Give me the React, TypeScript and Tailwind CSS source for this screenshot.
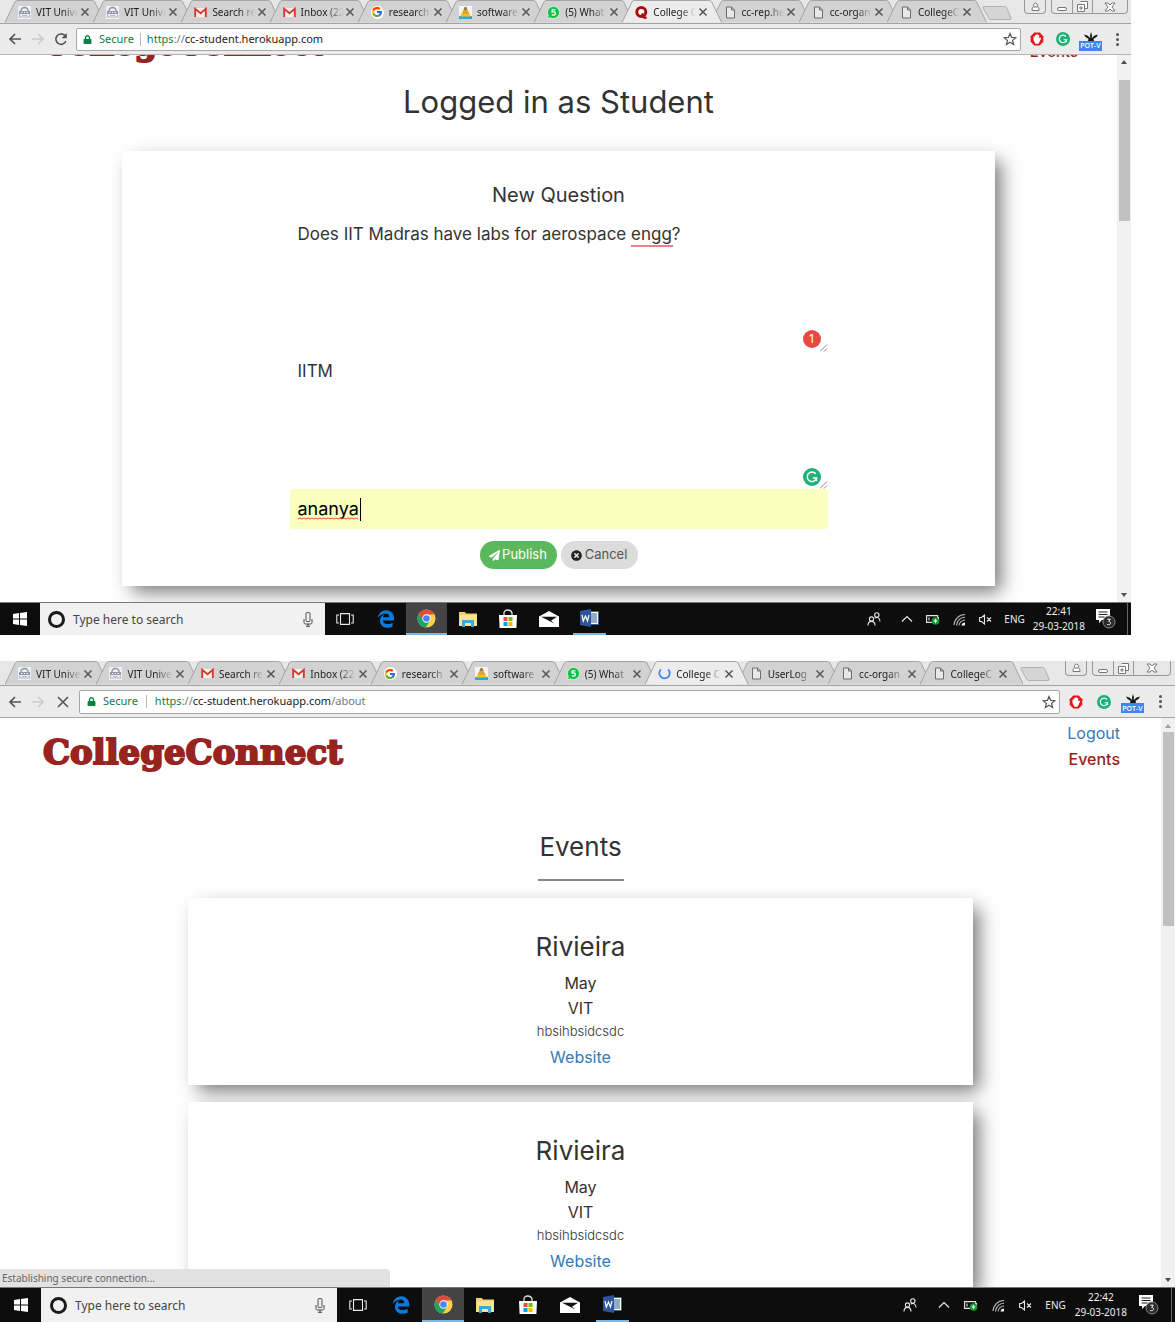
import React from "react";
import { FcGoogle } from "react-icons/fc";
import { FaEdgeLegacy, FaLock, FaPaperPlane, FaTimesCircle } from "react-icons/fa";

type IconProps = { className?: string };

/* ---------- favicons ---------- */

function CrestIcon() {
  return (
    <svg viewBox="0 0 13 13" className="size-[13px]">
      <rect width="13" height="13" fill="#eef0f4" />
      <path d="M3 5a3.500 3.500 0 0 1 7 0" fill="none" stroke="#8d92a5" strokeWidth="1.4" />
      <path d="M1 5h11v3H1z" fill="#9396a8" />
      <path d="M3 6.500h1.500M6 6.500h1M8.500 6.500h1.500" stroke="#fff" />
      <path d="M1.500 8.500v2.500h10V8.500M4 9.500h5" fill="none" stroke="#b5b8c6" strokeWidth="1.2" />
    </svg>
  );
}

function GmailIcon() {
  return (
    <svg viewBox="0 0 13 13" className="size-[13px]">
      <path d="M1 2h11v9H1z" fill="#f3f1f0" />
      <path d="M1.200 11V2.800L6.500 7.200l5.300-4.400V11" fill="none" stroke="#d5392c" strokeWidth="1.9" />
    </svg>
  );
}

function GoogleIcon() {
  return (
    <span className="flex size-[13px] items-center justify-center rounded-full bg-white">
      <FcGoogle className="size-3" />
    </span>
  );
}

function ConeIcon() {
  return (
    <svg viewBox="0 0 13 13" className="size-[13px]">
      <rect width="13" height="13" fill="#f4f4f4" />
      <path d="M0 10h13v3H0z" fill="#2aa7dd" />
      <path d="M5.500 1h2L8.500 4h-4z" fill="#8a8055" />
      <path d="M4.500 4h4l2 4h-8z" fill="#e5a323" />
      <path d="M2.500 8h8l1.500 2.500H1z" fill="#f2c31c" />
    </svg>
  );
}

function WhatsIcon() {
  return (
    <svg viewBox="0 0 13 13" className="size-[13px]">
      <path d="M6.500.5a6 6 0 1 1-3 11.200L.5 12.500l.9-3A6 6 0 0 1 6.500.5z" fill="#0dc143" stroke="#fff" strokeWidth=".6" />
      <path d="M8.400 3.800H5.200v2.400c2-.6 3.300 0 3.200 1.400-.1 1.500-2 1.900-3.600 1.100" fill="none" stroke="#fff" strokeWidth="1.300" />
    </svg>
  );
}

function QIcon() {
  return (
    <svg viewBox="0 0 13 13" className="size-[13px]">
      <circle cx="6.300" cy="6" r="4.500" fill="#fff" stroke="#a80d0d" strokeWidth="3" />
      <path d="M6 8l2-1.200 2 3.400c.4.700 1.200.8 1.800.2v1.800c-1.500 1.200-3 .8-4-.8z" fill="#a80d0d" />
    </svg>
  );
}

function SpinnerIcon() {
  return (
    <svg viewBox="0 0 13 13" className="size-[13px]">
      <path d="M3 2.300a5.200 5.200 0 1 0 7.200.2" fill="none" stroke="#4285f4" strokeWidth="1.800" />
    </svg>
  );
}

function PageIcon() {
  return (
    <svg viewBox="0 0 13 13" className="size-[13px]">
      <path d="M2.500 1h5l3 3v8h-8zM7.500 1v3h3" fill="#e8e8e8" stroke="#6b6b6b" />
    </svg>
  );
}

/* ---------- toolbar icons ---------- */

function BackIcon({ className }: IconProps) {
  return (
    <svg viewBox="0 0 14 12" className={className}>
      <path d="M13 6H2M7 1L2 6l5 5" fill="none" stroke="currentColor" strokeWidth="1.700" />
    </svg>
  );
}

function ReloadIcon() {
  return (
    <svg viewBox="0 0 14 14" className="size-[14px]">
      <path d="M11.900 9A5.200 5.200 0 1 1 10.700 3.400L12 4.700" fill="none" stroke="#555" strokeWidth="1.600" />
      <path d="M12.800 1v5.200H7.600z" fill="#555" />
    </svg>
  );
}

function CrossIcon({ className }: IconProps) {
  return (
    <svg viewBox="0 0 10 10" className={className}>
      <path d="M1.500 1.500l7 7M8.500 1.500l-7 7" stroke="currentColor" strokeWidth="1.500" />
    </svg>
  );
}

function StopIcon() {
  return (
    <svg viewBox="0 0 14 14" className="size-[14px]">
      <path d="M2 2l10 10M12 2L2 12" stroke="#555" strokeWidth="1.600" />
    </svg>
  );
}

function StarIcon() {
  return (
    <svg viewBox="0 0 14 14" className="size-[14px]">
      <path d="M7 1.500l1.600 3.900 4.200.3-3.200 2.700 1 4.100L7 10.300l-3.600 2.200 1-4.100L1.200 5.700l4.200-.3z" fill="none" stroke="#555" strokeWidth="1.200" />
    </svg>
  );
}

function HandIcon() {
  return (
    <svg viewBox="0 0 14 14" className="size-[14px]">
      <path d="M4.300.5h5.400l3.600 3.800v5.400l-3.600 3.800H4.300L.7 9.700V4.300z" fill="#e8151a" />
      <path d="M5.200 11.500L3.500 8V4.500h1.400V3h1.400v-.8h1.500V3h1.400v3.600l1-1 1 .7-2.200 4.700-.8.800H5.800z" fill="#fff" />
    </svg>
  );
}

function GrammarIcon({ className }: IconProps) {
  return (
    <svg viewBox="0 0 18 18" className={className}>
      <circle cx="9" cy="9" r="9" fill="#1fb177" />
      <path d="M12.800 5.800A4.800 4.800 0 1 0 13.700 10H9.800M13.500 9.500v3.500" fill="none" stroke="#fff" strokeWidth="1.500" />
    </svg>
  );
}

function LeafIcon() {
  return (
    <span className="flex w-[23px] flex-col items-center">
      <svg viewBox="0 0 16 9" className="h-[9px] w-4">
        <path d="M8 0l1 3.500L8.700 6l3-2.500L15 2.500 13.500 5l-3 1.800L11 9H5l.5-2.200L2.500 5 1 2.500l3.300 1 3 2.500L7 3.500z" fill="#151515" />
      </svg>
      <span className="flex h-[10px] w-full items-center justify-center bg-[#3f84f1] font-['Open_Sans',sans-serif] text-[7px] leading-none font-semibold text-white">
        POT-V
      </span>
    </span>
  );
}

/* ---------- taskbar icons ---------- */

function WindowsIcon() {
  return (
    <svg viewBox="0 0 14 14" className="size-[14px]">
      <path d="M0 2l6-.900v5.500H0zM7 1l7-1v6.600H7zM0 7.500h6V13l-6-.900zM7 7.500h7V14l-7-1z" fill="#fff" />
    </svg>
  );
}

function MicIcon() {
  return (
    <svg viewBox="0 0 10 15" className="h-[15px] w-[10px]">
      <rect x="3" y=".6" width="4" height="9" rx="1" fill="#eee" stroke="#555" />
      <path d="M1 7v3.500c0 1 .8 1.500 1.500 1.500h5c.8 0 1.500-.5 1.500-1.500V7M5 12v2M3 14.300h4" fill="none" stroke="#444" />
    </svg>
  );
}

function TaskViewIcon() {
  return (
    <svg viewBox="0 0 18 12" className="h-3 w-[18px]">
      <path d="M4.500.6h9v10.800h-9zM3 2H.800v8H3M15 2h2.200v8H15" fill="none" stroke="#e8e8e8" strokeWidth="1.100" />
    </svg>
  );
}

function EdgeIcon() {
  return <FaEdgeLegacy className="size-[18px] text-[#0a7bdc]" />;
}

function ChromeIcon() {
  return (
    <svg viewBox="0 0 20 20" className="size-[19px]">
      <circle cx="10" cy="10" r="9.500" fill="#ffd149" />
      <path d="M1.800 5.200A9.500 9.500 0 0 1 18.500 5.800H10L6 12.200z" fill="#dc4b3e" />
      <path d="M1.800 5.200A9.500 9.500 0 0 0 9.200 19.500l4.300-7H6.500z" fill="#1ea362" />
      <circle cx="10" cy="10" r="4.400" fill="#fff" />
      <circle cx="10" cy="10" r="3.500" fill="#4587f3" />
    </svg>
  );
}

function FolderIcon() {
  return (
    <svg viewBox="0 0 18 16" className="h-4 w-[18px]">
      <path d="M0 1h6l1 1.500h11V15H0z" fill="#f5cf66" />
      <path d="M1 4h17v11H0z" fill="#ffe292" />
      <path d="M3 9h12v7h-3v-4H6v4H3z" fill="#3ba8de" />
    </svg>
  );
}

function StoreIcon() {
  return (
    <svg viewBox="0 0 20 20" className="size-5">
      <path d="M6 6V4c0-4 7-4 8 0v2" fill="none" stroke="#ddd" strokeWidth="1.300" />
      <path d="M1 6h18l-.6 13H1.600z" fill="#fff" />
      <path d="M5.500 8h4v4h-4z" fill="#f04e23" />
      <path d="M10.500 8h4v4h-4z" fill="#7fba00" />
      <path d="M5.500 13h4v4h-4z" fill="#00a1f1" />
      <path d="M10.500 13h4v4h-4z" fill="#ffb900" />
    </svg>
  );
}

function MailIcon() {
  return (
    <svg viewBox="0 0 20 16" className="h-4 w-5">
      <path d="M0 5.500L10 0l10 5.500V16H0z" fill="#fff" />
      <path d="M2 5.800h16l-6 4 3.500 3-6-3.300z" fill="#111" />
    </svg>
  );
}

function WordIcon() {
  return (
    <svg viewBox="0 0 19 18" className="h-[18px] w-[19px]">
      <path d="M10 2.500h8.500v13H10z" fill="#fff" stroke="#2b5797" strokeWidth=".8" />
      <path d="M11 5h6M11 7h6M11 9h6M11 11h6M11 13h6" stroke="#2b5797" />
      <path d="M0 2l11-2v18L0 16z" fill="#2b5699" />
      <path d="M2 6l1.300 6L5.500 7l2 5L9 6" fill="none" stroke="#fff" strokeWidth="1.200" />
    </svg>
  );
}

function PeopleIcon() {
  return (
    <svg viewBox="0 0 14 14" className="size-[14px]">
      <g fill="none" stroke="#e6e6e6" strokeWidth="1.100">
        <circle cx="4.500" cy="7" r="2.100" />
        <path d="M1 13.500c0-5.500 7-5.500 7 0" />
        <circle cx="9.800" cy="3" r="2.200" />
        <path d="M7.800 6c2.500-1.500 5.200 0 5.200 3.500" />
      </g>
    </svg>
  );
}

function ChevronIcon() {
  return (
    <svg viewBox="0 0 12 8" className="h-2 w-3">
      <path d="M1 6.500l5-5 5 5" fill="none" stroke="#e6e6e6" strokeWidth="1.200" />
    </svg>
  );
}

function BatteryIcon() {
  return (
    <svg viewBox="0 0 14 11" className="h-[11px] w-[14px]">
      <path d="M.6 1.600h11v6.800h-11zM3 3.500v3M12.500 3v3" fill="none" stroke="#e6e6e6" strokeWidth="1.100" />
      <circle cx="9.500" cy="7" r="3.800" fill="#149b2e" />
      <path d="M9.500 4.800v4.400M8.300 5.800v1.500h2.400V5.800" fill="none" stroke="#fff" strokeWidth=".8" />
    </svg>
  );
}

function WifiIcon() {
  return (
    <svg viewBox="0 0 13 13" className="size-[13px]">
      <g fill="none" stroke="#b9b9b9" strokeWidth="1.100">
        <path d="M1 12A11 11 0 0 1 12 1.500" />
        <path d="M3.500 12.500A8.500 8.500 0 0 1 12 4.300" />
        <path d="M6 12.500A6 6 0 0 1 12 7" />
      </g>
      <path d="M8.500 12.500A3.500 3.500 0 0 1 12 9.500v3z" fill="#eee" />
    </svg>
  );
}

function MuteIcon() {
  return (
    <svg viewBox="0 0 13 11" className="h-[11px] w-[13px]">
      <path d="M.6 3.500h2L5.500 1v9L2.600 7.500h-2zM8 3.500l4 4M12 3.500l-4 4" fill="none" stroke="#e6e6e6" strokeWidth="1.100" />
    </svg>
  );
}

function NoticeIcon() {
  return (
    <svg viewBox="0 0 20 20" className="size-5">
      <path d="M0 0h14v11H6l-3 3v-3H0z" fill="#fff" />
      <path d="M2.500 3h9M2.500 5.500h9M2.500 8h6" stroke="#222" />
      <circle cx="13" cy="13" r="6" fill="#2c2c2c" stroke="#888" />
      <path d="M11.300 10.200h3l-1.600 2.200c2.700.2 2.200 3.400-.2 3.300-.6 0-1.100-.2-1.500-.5" fill="none" stroke="#fff" />
    </svg>
  );
}

/* ---------- browser chrome ---------- */

type Tab = { title: string; icon: React.ReactNode; active?: boolean };

function TabItem({ tab }: { tab: Tab }) {
  return (
    <div className={tab.active ? "relative z-10 h-full min-w-0 flex-1" : "relative h-full min-w-0 flex-1"}>
      <svg viewBox="0 0 100 24" preserveAspectRatio="none" className="absolute top-0 left-0 h-full w-[113%]">
        <path
          d="M0 23.500L10 2Q11 .5 13 .5H87Q89 .5 90 2L100 23.500"
          fill={tab.active ? "#ececec" : "#d2d2d2"}
          stroke="#a3a3a3"
          vectorEffect="non-scaling-stroke"
        />
      </svg>
      <div className="relative flex h-full items-center pt-px pl-[13px]">
        <span className="shrink-0">{tab.icon}</span>
        <span className="ml-[5px] min-w-0 flex-1 overflow-hidden text-[10px] leading-4 whitespace-nowrap text-[#222] [mask-image:linear-gradient(to_right,black_60%,transparent_95%)]">
          {tab.title}
        </span>
        <button type="button" aria-label="Close tab" className="mr-[3px] shrink-0">
          <CrossIcon className="size-[10px] text-[#555]" />
        </button>
      </div>
    </div>
  );
}

function WindowControls({ large }: { large?: boolean }) {
  return (
    <div className={large ? "flex h-[15px] gap-[5px]" : "flex h-[14px] gap-[5px]"}>
      <button type="button" aria-label="Profile" className="flex w-[22px] items-center justify-center rounded-b border border-t-0 border-[#999]">
        <svg viewBox="0 0 9 10" className="h-[10px] w-[9px]">
          <path d="M3 4.500a2 2 0 1 1 3 0C7.500 5 8 6 8 8.500H1C1 6 1.500 5 3 4.500zM3 5h3" fill="#fff" stroke="#777" />
        </svg>
      </button>
      <div className={large ? "flex w-[79px] rounded-b border border-t-0 border-[#999]" : "flex w-[77px] rounded-b border border-t-0 border-[#999]"}>
        <button type="button" aria-label="Minimise" className="flex w-5 items-end justify-center pb-[2px]">
          <span className="h-[4px] w-[10px] rounded-xs border border-[#777] bg-white" />
        </button>
        <button type="button" aria-label="Restore" className="flex w-[21px] items-center justify-center border-x border-[#999]">
          <svg viewBox="0 0 11 11" className="size-[11px]">
            <path d="M3.500.5h7v7h-3M.5 3.500h7v7h-7zM3 6h2v2H3z" fill="#fff" stroke="#777" />
          </svg>
        </button>
        <button type="button" aria-label="Close window" className="flex flex-1 items-center justify-center">
          <svg viewBox="0 0 12 10" className="h-[10px] w-3">
            <path d="M1 1h3l2 2 2-2h3L8 5l3 4H8L6 7 4 9H1l3-4z" fill="#fff" stroke="#777" />
          </svg>
        </button>
      </div>
    </div>
  );
}

type ChromeProps = { tabs: Tab[]; path?: string; loading?: boolean; large?: boolean };

function BrowserChrome({ tabs, path, loading, large }: ChromeProps) {
  return (
    <header className="bg-[#e7e7e7] font-['Noto_Sans','Open_Sans',sans-serif] font-normal">
      <div className={large ? "flex h-[25px] border-b border-[#a3a3a3] pr-[4px] pl-[5px]" : "flex h-6 border-b border-[#a3a3a3] pr-[3px] pl-[5px]"}>
        <div className="flex min-w-0 flex-1">
          {tabs.map((tab, i) => (
            <TabItem key={i} tab={tab} />
          ))}
        </div>
        <div className={large ? "ml-[9px] pt-[6px] pr-[15px]" : "ml-[7px] pt-[6px] pr-3"}>
          <svg viewBox="0 0 30 14" className="h-[14px] w-[30px]">
            <path d="M1.500.5h21q1.500 0 2 1L29 12q.5 1.500-1 1.500H9q-1.500 0-2-1L1 2Q.500.500 1.500.500z" fill="#d5d5d5" stroke="#b0b0b0" />
          </svg>
        </div>
        <WindowControls large={large} />
      </div>
      <div
        className={
          large
            ? "flex h-8 items-center border-b border-[#a8a8a8] bg-[#ececec] pl-2"
            : "flex h-[31px] items-center border-b border-[#b5b5b5] bg-[#ececec] pl-2"
        }
      >
        <button type="button" aria-label="Back">
          <BackIcon className="h-3 w-[14px] text-[#555]" />
        </button>
        <button type="button" aria-label="Forward" className="ml-[9px]">
          <BackIcon className="h-3 w-[14px] rotate-180 text-[#ccc]" />
        </button>
        <button type="button" aria-label={loading ? "Stop" : "Reload"} className={large ? "ml-[11px]" : "ml-[9px]"}>
          {loading ? <StopIcon /> : <ReloadIcon />}
        </button>
        <div className={large ? "ml-[9px] flex h-6 flex-1 items-center rounded-xs border border-[#a8a8a8] bg-white pr-[6px] pl-[7px] text-[11px]" : "ml-2 flex h-[23px] flex-1 items-center rounded-xs border border-[#a8a8a8] bg-white px-[6px] text-[11px]"}>
          <FaLock className="size-[9px] text-[#0b8043]" />
          <span className="ml-[7px] text-[#0b8043]">Secure</span>
          <span className={large ? "mx-2 h-[13px] w-px bg-[#bbb]" : "mx-[6px] h-[13px] w-px bg-[#bbb]"} />
          <span className="text-[#0b8043]">https</span>
          <span className="text-[#777]">://</span>
          <span className="text-[#222]">cc-student.herokuapp.com</span>
          <span className="text-[#777]">{path}</span>
          <button type="button" aria-label="Bookmark this page" className="-mr-[3px] ml-auto">
            <StarIcon />
          </button>
        </div>
        <div className={large ? "flex items-center gap-[10px] pr-[13px] pl-[9px]" : "flex items-center gap-[9px] pr-3 pl-[9px]"}>
          <HandIcon />
          <GrammarIcon className={large ? "ml-1 size-[14px]" : "ml-[3px] size-[14px]"} />
          <span className="-mr-1 pt-1">
            <LeafIcon />
          </span>
          <button type="button" aria-label="Menu" className="ml-[9px] flex flex-col gap-[2px]">
            <span className="size-[3px] rounded-full bg-[#555]" />
            <span className="size-[3px] rounded-full bg-[#555]" />
            <span className="size-[3px] rounded-full bg-[#555]" />
          </button>
        </div>
      </div>
    </header>
  );
}

function ScrollBar({ thumb, top, faded }: { thumb: string; top: string; faded?: boolean }) {
  return (
    <div className="flex w-[14px] shrink-0 flex-col items-center bg-[#f1f1f1]">
      <svg viewBox="0 0 8 4" className={top}>
        <path d="M1 4l3-4 3 4z" fill={faded ? "#a0a0a0" : "#505050"} />
      </svg>
      <div className={thumb} />
      <svg viewBox="0 0 8 4" className="mt-auto mb-[5px] h-1 w-2">
        <path d="M1 0l3 4 3-4z" fill="#505050" />
      </svg>
    </div>
  );
}

/* ---------- taskbar ---------- */

function Taskbar({ time, large }: { time: string; large?: boolean }) {
  const cell = "flex h-full flex-1 items-center justify-center";
  return (
    <footer
      className={
        large
          ? "flex h-[35px] items-center border-t border-[#777] bg-[#0d0d0d] font-['Noto_Sans','Open_Sans',sans-serif] font-normal"
          : "flex h-[33px] items-center border-t border-[#777] bg-[#0d0d0d] font-['Noto_Sans','Open_Sans',sans-serif] font-normal"
      }
    >
      <button type="button" aria-label="Start" className={large ? "flex w-[41px] justify-center" : "flex w-10 justify-center"}>
        <WindowsIcon />
      </button>
      <label
        className={
          large
            ? "flex h-full w-[296px] items-center bg-[#f1f1f1] pr-3 pl-[9px]"
            : "flex h-full w-[285px] items-center bg-[#f1f1f1] pr-3 pl-2"
        }
      >
        <span className="size-[17px] shrink-0 rounded-full border-[3px] border-[#1a1a1a]" />
        <input
          aria-label="Search"
          placeholder="Type here to search"
          className="mt-px ml-2 min-w-0 flex-1 bg-transparent text-[12px] outline-none placeholder:text-[#444]"
        />
        <MicIcon />
      </label>
      <div className={large ? "flex h-full w-[297px]" : "flex h-full w-[285px]"}>
        <button type="button" aria-label="Task view" className={cell}>
          <TaskViewIcon />
        </button>
        <button type="button" aria-label="Edge" className={cell}>
          <EdgeIcon />
        </button>
        <button type="button" aria-label="Chrome" className="flex h-full flex-1 items-center justify-center border-b-2 border-[#76b9ed] bg-[#444]">
          <ChromeIcon />
        </button>
        <button type="button" aria-label="Files" className={cell}>
          <FolderIcon />
        </button>
        <button type="button" aria-label="Store" className={cell}>
          <StoreIcon />
        </button>
        <button type="button" aria-label="Mail" className={cell}>
          <MailIcon />
        </button>
        <button type="button" aria-label="Word" className={cell}>
          <span className="flex h-full w-[33px] items-center justify-center border-b-2 border-[#76b9ed]">
            <WordIcon />
          </span>
        </button>
      </div>
      <div
        className={
          large
            ? "ml-auto flex h-full items-center gap-[14px] pr-[3px] text-[10px] text-[#eee]"
            : "ml-auto flex h-full items-center gap-[13px] pr-[3px] text-[10px] text-[#eee]"
        }
      >
        <PeopleIcon />
        <span className="ml-[7px] flex">
          <ChevronIcon />
        </span>
        <BatteryIcon />
        <WifiIcon />
        <MuteIcon />
        <span className="-ml-px">ENG</span>
        <span className="-mr-[2px] -ml-[5px] text-center leading-[15px]">
          {time}
          <br />
          29-03-2018
        </span>
        <NoticeIcon />
        <span className="-ml-[2px] h-full w-px bg-[#666]" />
      </div>
    </footer>
  );
}

/* ---------- page content ---------- */

const firstTabs: Tab[] = [
  { title: "VIT Unive", icon: <CrestIcon /> },
  { title: "VIT Unive", icon: <CrestIcon /> },
  { title: "Search re", icon: <GmailIcon /> },
  { title: "Inbox (22", icon: <GmailIcon /> },
  { title: "research", icon: <GoogleIcon /> },
  { title: "software", icon: <ConeIcon /> },
  { title: "(5) What", icon: <WhatsIcon /> },
  { title: "College C", icon: <QIcon />, active: true },
  { title: "cc-rep.he", icon: <PageIcon /> },
  { title: "cc-organ", icon: <PageIcon /> },
  { title: "CollegeC", icon: <PageIcon /> },
];

const secondTabs: Tab[] = [
  ...firstTabs.slice(0, 7),
  { title: "College C", icon: <SpinnerIcon />, active: true },
  { title: "UserLog", icon: <PageIcon /> },
  ...firstTabs.slice(9),
];

function ResizeGrip() {
  return (
    <svg viewBox="0 0 8 8" className="absolute right-0 bottom-0 z-10 size-2">
      <path d="M0 7.500L7 .5M4 7.500L7 4.500" stroke="#888" />
    </svg>
  );
}

function QuestionForm() {
  return (
    <form className="mx-auto mt-[29px] w-full max-w-[873px] bg-white pt-[30px] pb-[17px] shadow-[8px_8px_18px_-2px_#777]">
      <h2 className="text-center text-[20px] leading-7 font-normal">New Question</h2>
      <div className="mx-auto mt-[6px] w-full max-w-[538px] text-[17px] font-normal">
        <div className="relative h-[137px]">
          <textarea
            aria-label="Question"
            defaultValue="Does IIT Madras have labs for aerospace engg?"
            spellCheck={false}
            className="block size-full resize-none px-2 py-[7px] leading-6 outline-none"
          />
          <span className="absolute top-[30px] left-[341px] h-[2px] w-[42px] bg-[#ee7f86]" />
          <span className="absolute right-[7px] bottom-1 flex size-[18px] items-center justify-center rounded-full bg-[#e84a43] text-[12px] text-white">
            1
          </span>
          <ResizeGrip />
        </div>
        <div className="relative h-[137px]">
          <textarea
            aria-label="College"
            defaultValue="IITM"
            spellCheck={false}
            className="block size-full resize-none px-2 py-[7px] leading-6 outline-none"
          />
          <GrammarIcon className="absolute right-[7px] bottom-[3px] size-[18px]" />
          <ResizeGrip />
        </div>
        <div className="relative">
          <input
            aria-label="Name"
            defaultValue="ananya"
            spellCheck={false}
            className="block h-10 w-full rounded-[3px] bg-[#faffbd] px-2 pb-px text-[18px] text-black outline-none"
          />
          <span className="absolute top-[9px] left-[70px] h-[23px] w-px bg-black" />
          <svg viewBox="0 0 64 3" className="absolute top-7 left-2 h-[3px] w-16">
            <path
              d="M0 2l2-1 2 1 2-1 2 1 2-1 2 1 2-1 2 1 2-1 2 1 2-1 2 1 2-1 2 1 2-1 2 1 2-1 2 1 2-1 2 1 2-1 2 1 2-1 2 1 2-1 2 1 2-1 2 1 2-1 2 1"
              fill="none"
              stroke="#f0483e"
            />
          </svg>
        </div>
      </div>
      <div className="mt-3 flex justify-center gap-1 text-[13px] font-normal">
        <button type="button" className="flex h-7 w-[77px] items-center justify-center gap-[2px] rounded-full bg-[#5cb85c] text-white">
          <FaPaperPlane className="size-[11px]" />
          Publish
        </button>
        <button type="button" className="flex h-7 w-[77px] items-center justify-center gap-[3px] rounded-full bg-[#dcdcdc] text-[#555]">
          <FaTimesCircle className="size-[11px] text-[#222]" />
          Cancel
        </button>
      </div>
    </form>
  );
}

function EventCard() {
  return (
    <article className="mx-auto mb-[17px] h-[187px] w-full max-w-[785px] bg-white pt-8 text-center text-[16px] font-normal shadow-[8px_8px_18px_-2px_#777]">
      <h2 className="text-[26px] leading-[34px]">Rivieira</h2>
      <p className="mt-[7px] leading-[25px]">May</p>
      <p className="leading-[25px]">VIT</p>
      <p className="text-[13px] leading-5 font-light">hbsihbsidcsdc</p>
      <a href="#website" className="leading-8 text-[#337ab7]">
        Website
      </a>
    </article>
  );
}

export default function App() {
  return (
    <main className="bg-white font-[Inter,sans-serif] font-light text-[#333]">
      <section className="mr-11">
        <BrowserChrome tabs={firstTabs} />
        <div className="flex h-[547px] overflow-hidden">
          <div className="min-w-0 flex-1">
            <div className="-mt-[31px] flex h-[45px] items-start justify-between pr-[39px] pl-[43px]">
              <div className="font-['DejaVu_Serif',serif] text-[32px] leading-10 font-bold text-[#98231f] [-webkit-text-stroke:2px_#98231f]">
                CollegeConnect
              </div>
              <a href="#events" className="mt-4 text-[15px] leading-6 font-medium text-[#98231f]">
                Events
              </a>
            </div>
            <h1 className="mt-[13px] text-center text-[31px] leading-10 font-normal">Logged in as Student</h1>
            <QuestionForm />
          </div>
          <ScrollBar top="mt-[5px] h-1 w-2" thumb="mt-4 h-[141px] w-[11px] bg-[#c1c1c1]" />
        </div>
        <Taskbar time="22:41" />
      </section>
      <section className="mt-[26px]">
        <BrowserChrome tabs={secondTabs} path="/about" loading large />
        <div className="relative flex h-[569px] overflow-hidden">
          <div className="min-w-0 flex-1">
            <div className="flex justify-between pr-[41px] pl-[43px]">
              <div className="mt-[14px] font-['DejaVu_Serif',serif] text-[34px] leading-10 font-bold text-[#98231f] [-webkit-text-stroke:2px_#98231f]">
                CollegeConnect
              </div>
              <nav className="mt-[2px] flex flex-col items-end text-[16px] leading-[26px]">
                <a href="#logout" className="font-normal text-[#337ab7]">
                  Logout
                </a>
                <a href="#events" className="font-medium text-[#98231f]">
                  Events
                </a>
              </nav>
            </div>
            <h1 className="mt-[55px] text-center text-[26px] leading-10 font-normal">Events</h1>
            <div className="mx-auto mt-[12px] mb-[17px] h-[2px] w-[86px] bg-[#888]" />
            <EventCard />
            <EventCard />
          </div>
          <ScrollBar top="mt-[6px] h-1 w-2" thumb="mt-1 h-[194px] w-[11px] bg-[#c1c1c1]" faded />
          <div className="absolute bottom-0 left-0 h-[18px] w-[390px] rounded-tr bg-[#e2e2e2] px-[2px] font-['Noto_Sans','Open_Sans',sans-serif] text-[10px] leading-[18px] font-normal text-[#666]">
            Establishing secure connection...
          </div>
        </div>
        <Taskbar time="22:42" large />
      </section>
    </main>
  );
}
